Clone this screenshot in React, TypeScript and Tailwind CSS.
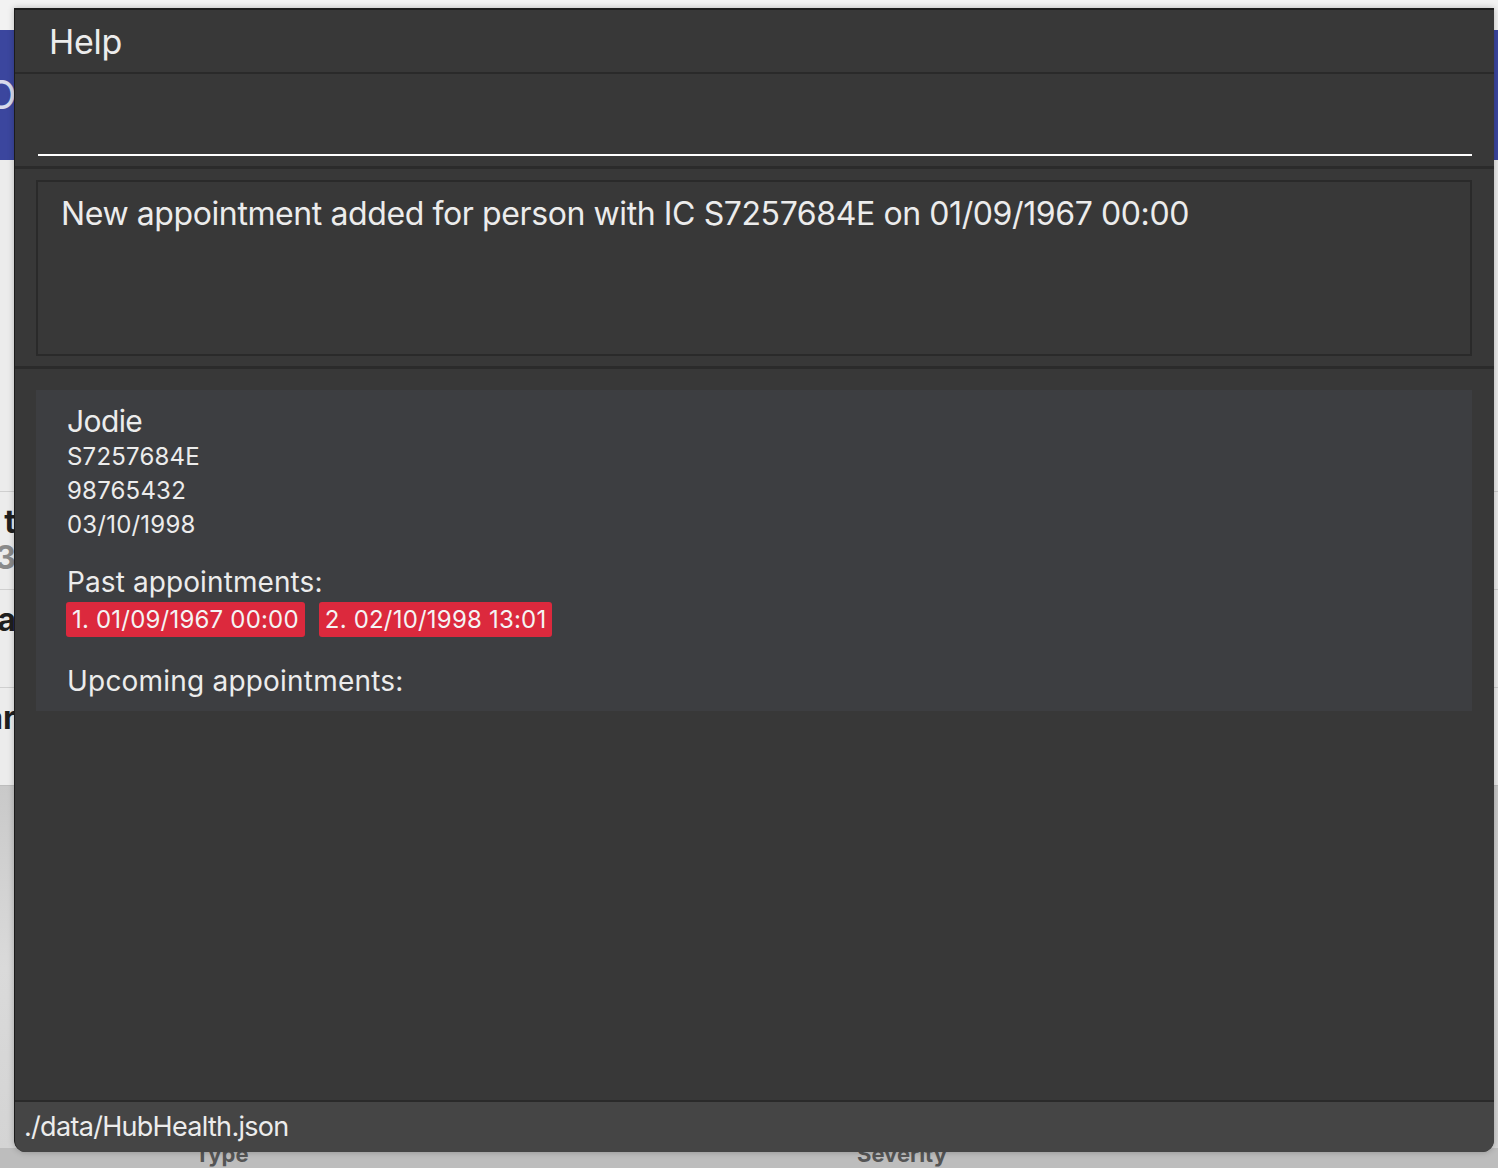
import React from "react";

function BgRow({ children, border = true }: { children: React.ReactNode; border?: boolean }) {
  return (
    <div
      className={`flex h-[98px] flex-col items-end bg-[#ececec] pr-[1482px] pt-[12px] leading-[36px] ${
        border ? "border-b border-[#cfcfcf]" : "border-b border-[#bdbdbd]"
      }`}
    >
      {children}
    </div>
  );
}

function BackgroundApp() {
  return (
    <div className="flex h-full w-full flex-col bg-[#efefef]">
      <div className="h-[30px] bg-[#f2f2f2]" />
      <div className="flex h-[130px] items-center bg-[#3b469e]">
        <span className="ml-[-14px] text-[40px] text-white/80">O</span>
      </div>
      <div className="flex flex-1 flex-col">
        <div className="h-[332px] border-b border-[#cfcfcf] bg-[#ececec]" />
        <BgRow>
          <span className="text-[32px] font-bold text-[#1f1f1f]">t</span>
          <span className="text-[32px] font-bold text-[#8a8a8a]">3</span>
        </BgRow>
        <BgRow>
          <span className="text-[32px] font-bold text-[#1f1f1f]">a</span>
        </BgRow>
        <BgRow border={false}>
          <span className="text-[32px] font-bold text-[#1f1f1f]">ar</span>
        </BgRow>
        <div className="flex-1 bg-gradient-to-b from-[#c9c9c9] via-[#dadada] to-[#d4d4d4]" />
        <div className="relative h-[20px] bg-[#bdbdbd] text-[22px] font-bold leading-none text-[#555]">
          <span className="absolute left-[195px] top-[-5px]">Type</span>
          <span className="absolute left-[857px] top-[-5px]">Severity</span>
        </div>
      </div>
    </div>
  );
}

function Tag({ children }: { children: React.ReactNode }) {
  return (
    <span className="rounded-[3px] bg-[#dc293d] px-[6px] text-[24px] leading-[35px] tracking-[0.2px] text-[#f4f4f4]">
      {children}
    </span>
  );
}

export default function App() {
  return (
    <div
      className="relative h-[1168px] w-[1498px] overflow-hidden"
      style={{ fontFamily: "Inter, 'Noto Sans', sans-serif" }}
    >
      <BackgroundApp />

      <div className="absolute left-[14px] top-[8px] flex h-[1144px] w-[1480px] flex-col overflow-hidden rounded-b-[12px] border-l border-t-2 border-[#1c1c1c] bg-[#383838] text-[#ececec] shadow-[0_0_6px_rgba(0,0,0,0.25)]">
        {/* menu */}
        <div className="flex h-[64px] items-center border-b-2 border-[#2a2a2a] pl-[34px]">
          <span className="text-[34px] tracking-[-0.3px]">Help</span>
        </div>

        {/* command box */}
        <div className="flex h-[95px] items-end border-b-[3px] border-[#2b2b2b] pb-[10px] pl-[23px] pr-[22px]">
          <div className="h-[2px] w-full bg-white" />
        </div>

        {/* result display */}
        <div className="h-[200px] border-b-[3px] border-[#2b2b2b] pl-[21px] pr-[22px] pt-[11px]">
          <div className="h-[176px] border-2 border-[#2a2a2a] px-[23px] pt-[10px]">
            <p className="text-[32px] leading-[44px] tracking-[-0.4px]">
              New appointment added for person with IC S7257684E on 01/09/1967 00:00
            </p>
          </div>
        </div>

        {/* person list */}
        <div className="flex-1 pl-[21px] pr-[22px] pt-[21px]">
          <div className="flex flex-col bg-[#3d3e41] pb-[12px] pl-[31px] pt-[12px]">
            <p className="text-[30px] leading-[38px] tracking-[-0.6px]">Jodie</p>
            <p className="text-[24px] leading-[34px] tracking-[0.2px]">S7257684E</p>
            <p className="text-[24px] leading-[34px] tracking-[0.2px]">98765432</p>
            <p className="text-[24px] leading-[34px] tracking-[0.2px]">03/10/1998</p>
            <p className="mt-[22px] text-[28px] leading-[36px] tracking-[0.1px]">Past appointments:</p>
            <div className="-ml-px mt-[2px] flex gap-[14px]">
              <Tag>1. 01/09/1967 00:00</Tag>
              <Tag>2. 02/10/1998 13:01</Tag>
            </div>
            <p className="mt-[26px] text-[28px] leading-[36px] tracking-[0.2px]">Upcoming appointments:</p>
          </div>
        </div>

        {/* status bar */}
        <div className="flex h-[52px] items-center border-t-2 border-[#2a2a2a] bg-[#454545] pl-[9px]">
          <span className="text-[27px] tracking-[-0.7px]">./data/HubHealth.json</span>
        </div>
      </div>
    </div>
  );
}
